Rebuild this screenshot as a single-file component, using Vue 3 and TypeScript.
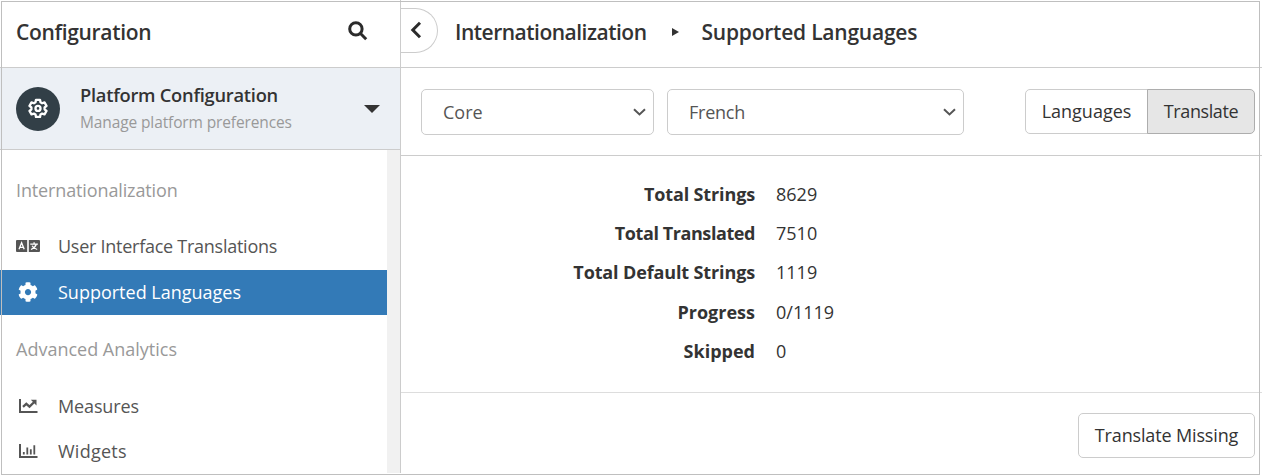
<script setup lang="ts">
import { ref } from 'vue'

interface NavItem {
  label: string
  icon: 'language' | 'gear' | 'line' | 'bars'
  fit: string
}

interface NavGroup {
  title: string
  fit: string
  items: NavItem[]
}

const groups: NavGroup[] = [
  {
    title: 'Internationalization',
    fit: 'snug',
    items: [
      { label: 'User Interface Translations', icon: 'language', fit: 'tight' },
      { label: 'Supported Languages', icon: 'gear', fit: '' },
    ],
  },
  {
    title: 'Advanced Analytics',
    fit: '',
    items: [
      { label: 'Measures', icon: 'line', fit: 'snug' },
      { label: 'Widgets', icon: 'bars', fit: 'wide' },
    ],
  },
]

const active = ref('Supported Languages')
const tab = ref('Translate')

const stats = [
  { label: 'Total Strings', value: '8629', fit: 'snug' },
  { label: 'Total Translated', value: '7510', fit: 'tighter' },
  { label: 'Total Default Strings', value: '1119', fit: 'snug' },
  { label: 'Progress', value: '0/1119', fit: '' },
  { label: 'Skipped', value: '0', fit: '' },
]
</script>

<template>
  <div class="page">
    <aside class="sidebar">
      <header class="side-head">
        <h1 class="title">Configuration</h1>
        <svg class="search" viewBox="0 0 20 20">
          <circle cx="7.9" cy="7.9" r="6.2" />
          <path d="M12.5 12.5L18.2 18.2" />
        </svg>
      </header>

      <div class="platform">
        <span class="avatar">
          <svg viewBox="0 0 24 24">
            <path d="M9.6 2.2h4.8l.6 3 1.9 1.1 2.9-1 2.4 4.1-2.3 2v2.2l2.3 2-2.4 4.1-2.9-1-1.9 1.1-.6 3H9.6l-.6-3-1.9-1.1-2.9 1-2.4-4.1 2.3-2v-2.2l-2.3-2 2.4-4.1 2.900 1L9 5.200z" />
            <circle cx="12" cy="12.500" r="3" />
          </svg>
        </span>
        <div class="platform-text">
          <strong>Platform Configuration</strong>
          <small>Manage platform preferences</small>
        </div>
        <svg class="caret" viewBox="0 0 16 8"><path d="M0 0H16L8 8Z" /></svg>
      </div>

      <div class="side-body">
        <nav class="nav">
          <section v-for="group in groups" :key="group.title">
            <h2 :class="group.fit">{{ group.title }}</h2>
            <a
              v-for="item in group.items"
              :key="item.label"
              class="item"
              :class="{ active: item.label === active }"
              @click="active = item.label"
            >
              <span class="icon">
                <svg v-if="item.icon === 'language'" class="language" viewBox="0 0 24 12">
                  <path class="fill" d="M1 0H11.200V12H1Q0 12 0 11V1Q0 0 1 0ZM12.800 0H23Q24 0 24 1V11Q24 12 23 12H12.800Z" />
                  <path class="mark" d="M3 9.300L5.600 2.800L8.200 9.300M4 7.300H7.200" />
                  <path class="mark" d="M14.300 4.100H21.900M18.100 2.300V4.100M20.300 4.300Q19.200 7.700 15 9.500M16.100 5.800Q17.300 8.300 21.200 9.500" />
                </svg>
                <svg v-else-if="item.icon === 'gear'" class="gear" viewBox="0 0 512 512">
                  <path d="M487.400 315.700l-42.600-24.600c4.300-23.200 4.300-47 0-70.200l42.600-24.600c4.900-2.800 7.100-8.600 5.500-14-11.100-35.600-30-67.800-54.700-94.600-3.800-4.100-10-5.100-14.800-2.300L380.800 110c-17.900-15.400-38.500-27.300-60.800-35.100V25.800c0-5.600-3.900-10.500-9.400-11.700-36.700-8.200-74.300-7.800-109.200 0-5.500 1.200-9.400 6.100-9.400 11.700V75c-22.200 7.900-42.800 19.800-60.800 35.100L88.700 85.500c-4.900-2.800-11-1.900-14.800 2.300-24.700 26.700-43.600 58.900-54.700 94.600-1.700 5.400.6 11.200 5.500 14L67.300 221c-4.300 23.200-4.300 47 0 70.200l-42.600 24.600c-4.900 2.800-7.100 8.600-5.500 14 11.100 35.600 30 67.800 54.700 94.600 3.800 4.100 10 5.100 14.800 2.300l42.600-24.600c17.900 15.400 38.500 27.300 60.800 35.100v49.200c0 5.600 3.900 10.500 9.400 11.700 36.700 8.200 74.300 7.800 109.200 0 5.500-1.200 9.400-6.100 9.400-11.700v-49.200c22.200-7.900 42.800-19.800 60.800-35.100l42.600 24.600c4.900 2.800 11 1.900 14.800-2.300 24.700-26.700 43.600-58.900 54.700-94.600 1.500-5.500-.7-11.300-5.600-14.100zM256 336c-44.100 0-80-35.900-80-80s35.900-80 80-80 80 35.900 80 80-35.900 80-80 80z" />
                </svg>
                <svg v-else class="chart" viewBox="0 0 19 14">
                  <path class="axis" d="M1 0V12.900H18.500" />
                  <template v-if="item.icon === 'line'">
                    <path class="trend" d="M4 7.800L7.300 4.800L10.500 7.600L15 3.200" />
                    <path class="fill" d="M11.800 .8H17.500V6.500Z" />
                  </template>
                  <path v-else class="columns" d="M4.800 10.500V8M8.300 10.500V3.500M11.800 10.500V5.200M15.300 10.500V1.300" />
                </svg>
              </span>
              <span :class="item.fit">{{ item.label }}</span>
            </a>
          </section>
        </nav>
        <div class="track"></div>
      </div>
    </aside>

    <main class="main">
      <header class="crumbs">
        <button class="back">
          <svg viewBox="0 0 12 18"><path d="M10 1.800L2.800 9L10 16.200" /></svg>
        </button>
        <span class="title crumb">Internationalization</span>
        <svg class="sep" viewBox="0 0 7 8"><path d="M0 0L7 4L0 8Z" /></svg>
        <span class="title page-name">Supported Languages</span>
      </header>

      <div class="toolbar">
        <div class="select core">
          <span>Core</span>
          <svg viewBox="0 0 13 8"><path d="M1 1.200L6.500 6.400L12 1.200" /></svg>
        </div>
        <div class="select lang">
          <span>French</span>
          <svg viewBox="0 0 13 8"><path d="M1 1.200L6.500 6.400L12 1.200" /></svg>
        </div>
        <div class="tabs">
          <button class="btn first" :class="{ on: tab === 'Languages' }" @click="tab = 'Languages'">Languages</button>
          <button class="btn last" :class="{ on: tab === 'Translate' }" @click="tab = 'Translate'">Translate</button>
        </div>
      </div>

      <dl class="stats">
        <div v-for="stat in stats" :key="stat.label" class="stat">
          <dt :class="stat.fit">{{ stat.label }}</dt>
          <dd>{{ stat.value }}</dd>
        </div>
      </dl>

      <footer class="foot">
        <button class="btn missing">Translate Missing</button>
      </footer>
    </main>
    <div class="frame"></div>
  </div>
</template>

<style scoped>
* {
  box-sizing: border-box;
}

.page {
  position: relative;
  display: flex;
  width: 1262px;
  height: 475px;
  overflow: hidden;
  background: #fff;
  color: #333;
  font: 400 18px/24px 'Open Sans', 'Noto Sans', sans-serif;
  white-space: nowrap;
}

.frame {
  position: absolute;
  inset: 1px 2px 0 1px;
  border: 1px solid #bfbfbf;
  pointer-events: none;
}

h1,
h2,
dl,
dt,
dd {
  margin: 0;
}

svg {
  display: block;
  flex: none;
  fill: none;
  stroke: none;
}

button {
  padding: 0;
  font: inherit;
  color: inherit;
  background: #fff;
}

.title {
  font-size: 21px;
  font-weight: 600;
  line-height: 28px;
  letter-spacing: -0.33px;
}

.tighter {
  letter-spacing: -0.42px;
}

.tight {
  letter-spacing: -0.26px;
}

.snug {
  letter-spacing: -0.13px;
}

.wide {
  letter-spacing: 0.25px;
}

.sidebar {
  display: flex;
  flex: none;
  flex-direction: column;
  width: 401px;
  height: 473px;
  border-right: 1px solid #ccc;
}

.side-head {
  display: flex;
  align-items: center;
  justify-content: space-between;
  height: 68px;
  padding: 0 32px 3px 16px;
  border-bottom: 1px solid #ccc;
}

.search {
  width: 20px;
  height: 20px;
  margin-top: -2px;
  stroke: #2b2b2b;
  stroke-width: 3;
}

.platform {
  display: flex;
  align-items: center;
  height: 82px;
  padding: 0 20px 0 16px;
  background: #ecf0f5;
  border-bottom: 1px solid #ccc;
}

.avatar {
  display: grid;
  place-items: center;
  width: 44px;
  height: 44px;
  padding-bottom: 2px;
  background: #323f47;
  border-radius: 50%;
}

.avatar svg {
  width: 20px;
  height: 20px;
  stroke: #fff;
  stroke-width: 2.8;
  stroke-linejoin: round;
}

.platform-text {
  flex: 1;
  margin-left: 20px;
  padding-bottom: 2px;
}

.platform-text strong,
.platform-text small {
  display: block;
}

.platform-text strong {
  font-size: 18.3px;
  font-weight: 600;
  line-height: 28px;
  letter-spacing: -0.25px;
}

.platform-text small {
  color: #999;
  font-size: 15.5px;
  line-height: 26px;
  letter-spacing: -0.12px;
}

.caret {
  width: 16px;
  height: 8px;
  fill: #333;
}

.side-body {
  display: flex;
  flex: 1;
  min-height: 0;
}

.nav {
  flex: 1;
  padding-top: 5px;
  overflow: hidden;
}

.track {
  width: 13px;
  background: #f1f1f1;
}

.nav h2 {
  height: 70px;
  padding-left: 16px;
  color: #999;
  font-size: inherit;
  font-weight: inherit;
  line-height: 70px;
}

.nav section + section h2 {
  height: 69px;
  line-height: 69px;
}

.item {
  display: flex;
  align-items: center;
  height: 45px;
  padding-bottom: 2px;
  color: #555;
  cursor: pointer;
}

.nav section:first-child h2 + .item {
  padding-bottom: 4px;
}

.item.active {
  color: #fff;
  background: #337ab7;
}

.icon {
  display: flex;
  justify-content: center;
  width: 58px;
  padding-right: 2px;
}

.fill {
  fill: currentColor;
}

.language {
  width: 24px;
  height: 12px;
}

.mark {
  stroke: #fff;
  stroke-width: 1.3;
}

.gear {
  width: 20px;
  height: 20px;
  fill: currentColor;
}

.chart {
  width: 19px;
  height: 14px;
  stroke: currentColor;
}

.axis {
  stroke-width: 2;
}

.trend {
  stroke-width: 2.3;
}

.chart .fill {
  stroke: none;
}

.columns {
  stroke-width: 1.8;
}

.main {
  flex: 1;
  min-width: 0;
}

.crumbs {
  display: flex;
  align-items: center;
  height: 68px;
  padding-bottom: 3px;
  border-bottom: 1px solid #ccc;
}

.back {
  display: flex;
  align-items: center;
  width: 37px;
  height: 45px;
  margin-top: -3px;
  padding: 0 0 2px 9px;
  border: 1px solid #ccc;
  border-left: 0;
  border-radius: 0 23px 23px 0;
}

.back svg {
  width: 12px;
  height: 18px;
  stroke: #2b2b2b;
  stroke-width: 3;
}

.crumb {
  margin-left: 17px;
  letter-spacing: -0.5px;
}

.page-name {
  letter-spacing: -0.22px;
}

.sep {
  width: 7px;
  height: 8px;
  margin: 0 23px 0 25px;
  fill: #333;
}

.toolbar {
  display: flex;
  height: 88px;
  padding: 21px 7px 0 20px;
  border-bottom: 1px solid #ccc;
}

.select {
  display: flex;
  align-items: center;
  justify-content: space-between;
  height: 46px;
  padding: 0 7px 0 21px;
  color: #555;
  border: 1px solid #ccc;
  border-radius: 5px;
}

.select svg {
  width: 13px;
  height: 8px;
  stroke: #555;
  stroke-width: 2;
}

.core {
  width: 233px;
  margin-right: 13px;
}

.lang {
  width: 297px;
  letter-spacing: -0.25px;
}

.tabs {
  display: flex;
  margin-left: auto;
}

.btn {
  height: 45px;
  padding-bottom: 2px;
  border: 1px solid #ccc;
  border-radius: 5px;
}

.first {
  width: 123px;
  border-radius: 5px 0 0 5px;
}

.last {
  width: 108px;
  margin-left: -1px;
  letter-spacing: -0.4px;
  border-radius: 0 5px 5px 0;
}

.on {
  background: #e6e6e6;
  border-color: #adadad;
}

.stats {
  height: 237px;
  padding-top: 19px;
  border-bottom: 1px solid #ddd;
}

.stat {
  display: flex;
  height: 39.2px;
  line-height: 39.2px;
}

dt {
  width: 354px;
  font-weight: 700;
  text-align: right;
}

dd {
  margin-left: 21px;
}

.foot {
  display: flex;
  justify-content: flex-end;
  padding: 20px 7px 0 0;
}

.missing {
  width: 177px;
  letter-spacing: -0.15px;
}
</style>
